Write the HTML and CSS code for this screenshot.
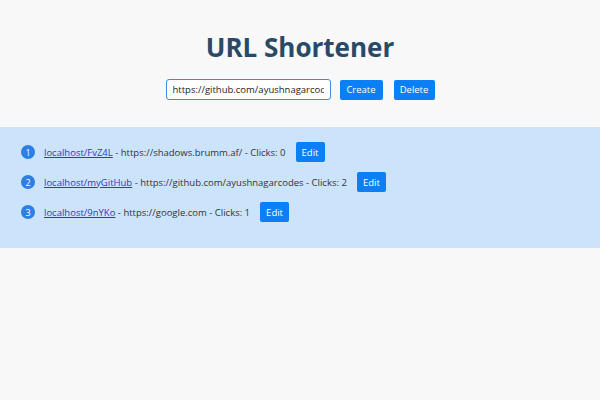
FILE: index.html
```html
<!DOCTYPE html>
<html>
<head>
<meta charset="utf-8">
<link rel="stylesheet" href="styles.css">
</head>
<body>
<header class="top">
  <h1 class="title">URL Shortener</h1>
  <form class="form">
    <input class="url-input" type="text" value="https://github.com/ayushnagarcodes">
    <button type="button" class="btn create">Create</button>
    <button type="button" class="btn delete">Delete</button>
  </form>
</header>
<section class="panel">
  <ul class="list">
    <li class="row"><span class="num">1</span><span class="text"><a href="#" class="link">localhost/FvZ4L</a> - https://shadows.brumm.af/ - Clicks: 0</span><button type="button" class="btn edit">Edit</button></li>
    <li class="row"><span class="num">2</span><span class="text"><a href="#" class="link">localhost/myGitHub</a> - https://github.com/ayushnagarcodes - Clicks: 2</span><button type="button" class="btn edit">Edit</button></li>
    <li class="row"><span class="num">3</span><span class="text"><a href="#" class="link">localhost/9nYKo</a> - https://google.com - Clicks: 1</span><button type="button" class="btn edit">Edit</button></li>
  </ul>
</section>
</body>
</html>
```
FILE: styles.css
```css
html, body {
  margin: 0;
  padding: 0;
  background: #f8f8f8;
  font-family: "Open Sans", "DejaVu Sans", sans-serif;
  color: #333;
}
.top {
  display: flex;
  flex-direction: column;
  align-items: center;
  padding-top: 29px;
}
.title {
  margin: 0;
  font-size: 26px;
  line-height: 36px;
  font-weight: 700;
  color: #284a68;
}
.form {
  display: flex;
  align-items: center;
  margin-top: 14px;
}
.url-input {
  box-sizing: border-box;
  width: 165px;
  height: 21px;
  border: 1px solid #3c8ae8;
  border-radius: 3px;
  padding: 0 6px;
  font-family: inherit;
  font-size: 9.5px;
  color: #222;
  background: #fff;
  outline: none;
}
.btn {
  box-sizing: border-box;
  height: 20px;
  border: none;
  border-radius: 2px;
  background: #0b7ff5;
  color: #fff;
  font-family: inherit;
  font-size: 9.5px;
  padding: 0;
}
.create {
  width: 43px;
  margin-left: 9px;
}
.delete {
  width: 41px;
  margin-left: 11px;
}
.panel {
  margin-top: 27px;
  background: #cbe4fb;
  padding: 15px 0 26px 21px;
}
.list {
  list-style: none;
  margin: 0;
  padding: 0;
  display: flex;
  flex-direction: column;
  gap: 10px;
}
.row {
  display: flex;
  align-items: center;
  height: 20px;
  font-size: 9.5px;
}
.num {
  width: 14px;
  height: 14px;
  border-radius: 50%;
  background: #2d7fe3;
  color: #fff;
  font-size: 9px;
  display: flex;
  align-items: center;
  justify-content: center;
  margin-right: 9px;
}
.link {
  color: #3535c8;
  text-decoration: underline;
}
.edit {
  margin-left: 10px;
  width: 29px;
}
```
